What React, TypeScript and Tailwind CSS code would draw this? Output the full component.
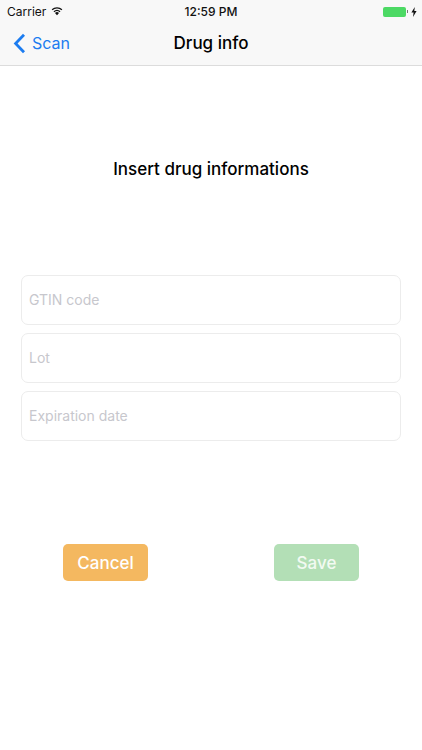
const font = "font-['Inter','Liberation_Sans',sans-serif]";

const fields = ["GTIN code", "Lot", "Expiration date"];

const StatusBar = () => (
  <div className="relative flex h-[21px] items-center justify-between pt-[2px] pl-[7px] pr-[5px] text-[12px] text-[#111]">
    <div className="flex items-center gap-[5px]">
      <span>Carrier</span>
      <svg width="12" height="10" viewBox="0 0 13 10" className="mb-[2px]">
        <path d="M6.5 9.6 4.3 7.1a3.2 3.2 0 0 1 4.4 0Z" fill="#111" />
        <path d="M3.2 5.8a4.9 4.9 0 0 1 6.6 0" fill="none" stroke="#111" strokeWidth="1.4" />
        <path d="M1.2 3.6a7.8 7.8 0 0 1 10.6 0" fill="none" stroke="#111" strokeWidth="1.4" />
      </svg>
    </div>
    {/* Clock */}
    <span className="absolute left-0 right-0 text-center font-medium">12:59 PM</span>
    <div className="flex items-center gap-[3px]">
      <div className="h-[10px] w-[23px] rounded-[2px] bg-[#4cd964]" />
      <div className="-ml-[2px] h-[3px] w-[1px] bg-[#777]" />
      <svg width="6" height="10" viewBox="0 0 6 10">
        <path d="M3.8 0 0.4 5.6h2.2L2 10l3.6-6H3.3Z" fill="#111" />
      </svg>
    </div>
  </div>
);

const NavBar = () => (
  <div className="relative flex h-[45px] items-center border-b border-[#dcdcdc] pt-[2px] pl-[13px]">
    <div className="mb-[2px] flex items-center gap-[6px] text-[#1c7cf0]">
      <svg width="13" height="21" viewBox="0 0 13 21">
        <path d="M11 1.8 2.6 10.5l8.4 8.7" fill="none" stroke="currentColor" strokeWidth="2.8" />
      </svg>
      <span className="text-[16px]">Scan</span>
    </div>
    <span className="absolute left-0 right-0 text-center text-[17px] font-medium text-black">
      Drug info
    </span>
  </div>
);

export default function App() {
  return (
    <div className={`h-[750px] w-[422px] overflow-hidden bg-white ${font}`}>
      <div className="bg-[#f8f8f8]">
        <StatusBar />
        <NavBar />
      </div>

      <h1 className="mt-[91px] text-center text-[17px] leading-[24px] font-medium text-black">
        Insert drug informations
      </h1>

      {/* Form */}
      <div className="mt-[94px] flex flex-col gap-2 px-[21px]">
        {fields.map((field) => (
          <div
            key={field}
            className="flex h-[50px] items-center rounded-[7px] border border-[#ececec] px-[7px] pb-[2px] text-[14px] text-[#c7c7cd]"
          >
            {field}
          </div>
        ))}
      </div>

      <div className="mt-[103px] flex justify-around">
        <button className="h-[37px] w-[85px] rounded-[5px] bg-[#f4b860] pt-[2px] text-[17px] font-medium text-white">
          Cancel
        </button>
        <button className="h-[37px] w-[85px] rounded-[5px] bg-[#b3dfb6] pt-[2px] text-[17px] font-medium text-[#f2faf2]">
          Save
        </button>
      </div>
    </div>
  );
}
